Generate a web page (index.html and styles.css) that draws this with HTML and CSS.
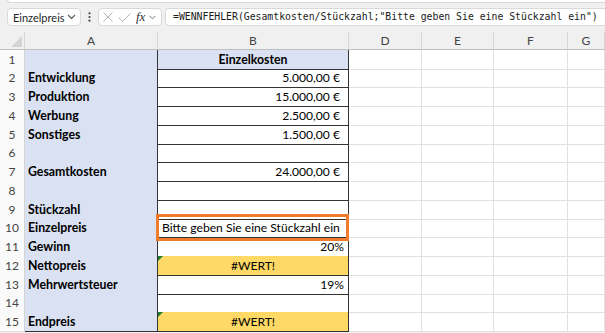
FILE: index.html
```html
<!DOCTYPE html>
<html>
<head>
  <title>Einzelpreis</title>
  <meta charset="utf-8">
  <link rel="stylesheet" href="styles.css">
</head>
<body>
  <div class="ribbon-edge"></div>
  <div class="formula-bar">
    <div class="name-box">
      <span>Einzelpreis</span>
      <svg width="9" height="6" viewBox="0 0 9 6"><path d="M1 1l3.5 3.5L8 1" fill="none" stroke="#555" stroke-width="1.1"/></svg>
    </div>
    <div class="dots">
      <svg width="3" height="10" viewBox="0 0 3 10"><circle cx="1.5" cy="1.3" r="1.1" fill="#444"/><circle cx="1.5" cy="5" r="1.1" fill="#444"/><circle cx="1.5" cy="8.7" r="1.1" fill="#444"/></svg>
    </div>
    <div class="fx-tools">
      <svg class="ic-x" width="10" height="10" viewBox="0 0 10 10"><path d="M0.5 0.5l9 9M9.5 0.5l-9 9" stroke="#b3b3b3" stroke-width="1"/></svg>
      <svg class="ic-ok" width="13" height="9" viewBox="0 0 13 9"><path d="M0.5 4.5l4 4L12.5 0.5" fill="none" stroke="#b3b3b3" stroke-width="1"/></svg>
      <span class="fx">fx</span>
      <svg class="ic-dd" width="7" height="5" viewBox="0 0 7 5"><path d="M0.5 0.8l3 3 3-3" fill="none" stroke="#777" stroke-width="1"/></svg>
    </div>
    <div class="formula">=WENNFEHLER(Gesamtkosten/Stückzahl;"Bitte geben Sie eine Stückzahl ein")</div>
  </div>

  <div class="sheet">
    <div class="row head">
      <div class="h corner"><span class="tri"></span></div>
      <div class="h">A</div><div class="h">B</div><div class="h">D</div><div class="h">E</div><div class="h">F</div><div class="h">G</div>
    </div>
    <div class="row"><div class="num">1</div><div class="a"></div><div class="b blue title">Einzelkosten</div><div class="g"></div><div class="g"></div><div class="g"></div><div class="g"></div></div>
    <div class="row"><div class="num">2</div><div class="a">Entwicklung</div><div class="b cur">5.000,00 €</div><div class="g"></div><div class="g"></div><div class="g"></div><div class="g"></div></div>
    <div class="row"><div class="num">3</div><div class="a">Produktion</div><div class="b cur">15.000,00 €</div><div class="g"></div><div class="g"></div><div class="g"></div><div class="g"></div></div>
    <div class="row"><div class="num">4</div><div class="a">Werbung</div><div class="b cur">2.500,00 €</div><div class="g"></div><div class="g"></div><div class="g"></div><div class="g"></div></div>
    <div class="row"><div class="num">5</div><div class="a">Sonstiges</div><div class="b cur">1.500,00 €</div><div class="g"></div><div class="g"></div><div class="g"></div><div class="g"></div></div>
    <div class="row"><div class="num">6</div><div class="a"></div><div class="b"></div><div class="g"></div><div class="g"></div><div class="g"></div><div class="g"></div></div>
    <div class="row"><div class="num">7</div><div class="a">Gesamtkosten</div><div class="b cur">24.000,00 €</div><div class="g"></div><div class="g"></div><div class="g"></div><div class="g"></div></div>
    <div class="row"><div class="num">8</div><div class="a"></div><div class="b"></div><div class="g"></div><div class="g"></div><div class="g"></div><div class="g"></div></div>
    <div class="row"><div class="num">9</div><div class="a">Stückzahl</div><div class="b"></div><div class="g"></div><div class="g"></div><div class="g"></div><div class="g"></div></div>
    <div class="row"><div class="num">10</div><div class="a">Einzelpreis</div><div class="b active">Bitte geben Sie eine Stückzahl ein</div><div class="g"></div><div class="g"></div><div class="g"></div><div class="g"></div></div>
    <div class="row"><div class="num">11</div><div class="a">Gewinn</div><div class="b pct">20%</div><div class="g"></div><div class="g"></div><div class="g"></div><div class="g"></div></div>
    <div class="row"><div class="num">12</div><div class="a">Nettopreis</div><div class="b err">#WERT!</div><div class="g"></div><div class="g"></div><div class="g"></div><div class="g"></div></div>
    <div class="row"><div class="num">13</div><div class="a">Mehrwertsteuer</div><div class="b pct">19%</div><div class="g"></div><div class="g"></div><div class="g"></div><div class="g"></div></div>
    <div class="row"><div class="num">14</div><div class="a"></div><div class="b"></div><div class="g"></div><div class="g"></div><div class="g"></div><div class="g"></div></div>
    <div class="row"><div class="num">15</div><div class="a">Endpreis</div><div class="b err">#WERT!</div><div class="g"></div><div class="g"></div><div class="g"></div><div class="g"></div></div>
  </div>
</body>
</html>
```

FILE: styles.css
```css
body {
  margin: 0;
  width: 605px;
  height: 333px;
  overflow: hidden;
  background-color: #f0f0f0;
  font-family: Lato, "Liberation Sans", sans-serif;
  color: #000;
}

/* toolbar */
.ribbon-edge {
  height: 2px;
  margin-left: 7px;
  background-color: #fff;
  border-left: 1px solid #dadada;
  border-bottom: 1px solid #dadada;
  border-bottom-left-radius: 5px;
}
.formula-bar {
  display: flex;
  height: 18px;
  margin: 5px 0 6px 0;
  padding-left: 7px;
}
.name-box {
  width: 74px;
  box-sizing: border-box;
  display: flex;
  align-items: center;
  justify-content: space-between;
  padding: 0 4px 0 5px;
  background-color: #fff;
  border: 1px solid #d9d9d9;
  border-radius: 4px;
  font-size: 11px;
  color: #262626;
}
.dots {
  width: 17px;
  display: flex;
  align-items: center;
  justify-content: center;
}
.fx-tools {
  width: 64px;
  box-sizing: border-box;
  display: flex;
  align-items: center;
  margin-right: 3px;
  padding-left: 4px;
  background-color: #fff;
  border: 1px solid #d9d9d9;
  border-radius: 4px;
}
.fx-tools .ic-ok { margin-left: 5px; }
.fx-tools .fx {
  margin-left: 5px;
  font-family: "Liberation Serif", serif;
  font-style: italic;
  font-size: 13px;
  color: #333;
  line-height: 14px;
}
.fx-tools .ic-dd { margin-left: 4px; }
.formula {
  flex: 1;
  padding-left: 7px;
  background-color: #fff;
  border: 1px solid #d9d9d9;
  border-right: none;
  border-radius: 4px 0 0 4px;
  font-family: "DejaVu Sans Mono", monospace;
  font-size: 9.8px;
  line-height: 16px;
  color: #1a1a1a;
  white-space: nowrap;
  overflow: hidden;
}

/* sheet */
.sheet {
  background-color: #fff;
}
.row {
  display: grid;
  grid-template-columns: 25px 133px 191px 73px 72px 74px 1fr;
  height: 18.75px;
  font-size: 12.1px;
  line-height: 19px;
}
.row > div {
  box-sizing: border-box;
  white-space: nowrap;
}
.row.head {
  height: 17.5px;
}
.h {
  background-color: #f0f0f0;
  border-right: 1px solid #d6d6d6;
  border-bottom: 1px solid #bfbfbf;
  text-align: center;
  font-size: 12px;
  line-height: 17px;
  color: #444;
}
.corner {
  position: relative;
}
.corner .tri {
  position: absolute;
  right: 2px;
  bottom: 2px;
  width: 0;
  height: 0;
  border-left: 11px solid transparent;
  border-bottom: 11px solid #d4d4d4;
}
.num {
  background-color: #fafafa;
  border-right: 1px solid #d4d4d4;
  border-bottom: 1px solid #e1e1e1;
  text-align: center;
  font-size: 12px;
  color: #444;
}
.a {
  padding-left: 3px;
  background-color: #d9e1f2;
  border-right: 1px solid #333;
  border-bottom: 1px solid #333;
  font-weight: 700;
  font-size: 12.3px;
}
.b {
  position: relative;
  padding: 0 4px;
  border-right: 1px solid #333;
  border-bottom: 1px solid #333;
}
.b.blue {
  background-color: #d9e1f2;
}
.b.title {
  text-align: center;
  font-weight: 700;
  font-size: 12.3px;
}
.b.cur {
  text-align: right;
  padding-right: 8px;
}
.b.pct {
  text-align: right;
}
.b.err {
  text-align: center;
  background-color: #ffd966;
}
.b.err::before {
  content: "";
  position: absolute;
  left: 0;
  top: 0;
  border-top: 5px solid #1f7a34;
  border-right: 5px solid transparent;
}
.b.active::after {
  content: "";
  position: absolute;
  left: -2px;
  right: -1px;
  top: -4px;
  bottom: -4px;
  border: 3px solid #f07b2c;
  z-index: 2;
}
.g {
  border-right: 1px solid #e1e1e1;
  border-bottom: 1px solid #e1e1e1;
}
```
